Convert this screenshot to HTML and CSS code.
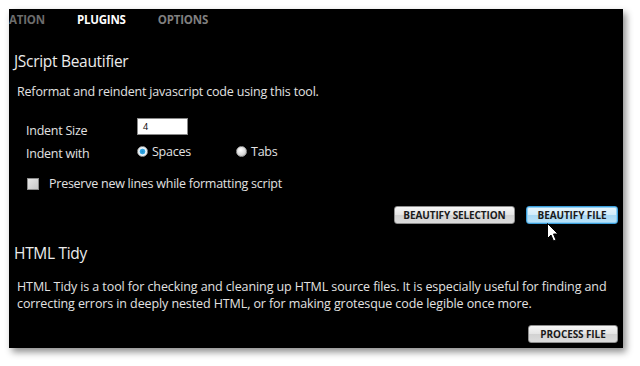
FILE: index.html
```html
<!DOCTYPE html>
<html>
<head>
<meta charset="utf-8">
<link rel="stylesheet" href="styles.css">
</head>
<body>
<div class="panel">
  <nav class="tabs">
    <span class="tab tab-cut">ATION</span>
    <span class="tab tab-active">PLUGINS</span>
    <span class="tab">OPTIONS</span>
  </nav>

  <section class="section">
    <h2 class="title">JScript Beautifier</h2>
    <p class="desc">Reformat and reindent javascript code using this tool.</p>
    <div class="form">
      <div class="row">
        <span class="label">Indent Size</span>
        <span class="input">4</span>
      </div>
      <div class="row">
        <span class="label">Indent with</span>
        <span class="radio-group">
          <span class="radio radio-on"></span><span class="radio-text">Spaces</span>
        </span>
        <span class="radio-group">
          <span class="radio"></span><span class="radio-text">Tabs</span>
        </span>
      </div>
      <div class="row row-check">
        <span class="check"></span>
        <span class="check-text">Preserve new lines while formatting script</span>
      </div>
    </div>
    <div class="actions">
      <span class="btn btn-sel">BEAUTIFY SELECTION</span>
      <span class="btn btn-hot">BEAUTIFY FILE
        <svg class="cursor" width="12" height="19" viewBox="0 0 12 19"><path d="M0.5 0.5 L0.5 15.5 L4 12 L6.5 18 L9 17 L6.5 11 L11 11 Z" fill="#fff" stroke="#000" stroke-width="1"/></svg>
      </span>
    </div>
  </section>

  <section class="section section-tidy">
    <h2 class="title">HTML Tidy</h2>
    <p class="desc desc-long">HTML Tidy is a tool for checking and cleaning up HTML source files. It is especially useful for finding and correcting errors in deeply nested HTML, or for making grotesque code legible once more.</p>
    <div class="actions actions-tidy">
      <span class="btn btn-proc">PROCESS FILE</span>
    </div>
  </section>
</div>
</body>
</html>
```
FILE: styles.css
```css
html, body {
  margin: 0;
  padding: 0;
  background: #ffffff;
}
body {
  width: 640px;
  height: 366px;
  overflow: hidden;
  font-family: "Open Sans", "Noto Sans", sans-serif;
}
.panel {
  margin: 9px 0 0 9px;
  width: 614px;
  height: 339px;
  background: #000;
  overflow: hidden;
  box-shadow: 3px 4px 7px rgba(0,0,0,0.45);
  position: relative;
  box-sizing: border-box;
  color: #e6e6e6;
}
.tabs {
  display: flex;
  gap: 32px;
  height: 20px;
  align-items: center;
  font-weight: 700;
  font-size: 11.5px;
  letter-spacing: -0.2px;
}
.tab { color: #7f7f7f; }
.tab-cut { margin-left: 0; color: #6c6c6c; }
.tab-active { color: #ffffff; }

.section { padding: 0 5px 0 4px; }
.title {
  margin: 22px 0 0 1px;
  font-size: 15.5px;
  font-weight: 400;
  line-height: 20px;
  color: #ececec;
  letter-spacing: -0.3px;
}
.desc {
  margin: 12px 0 0 4px;
  font-size: 12.5px;
  line-height: 17px;
  color: #e2e2e2;
  letter-spacing: -0.18px;
}
.form { margin: 19px 0 0 13px; }
.row {
  display: flex;
  align-items: center;
  height: 23px;
  font-size: 12.5px;
  color: #e2e2e2;
  letter-spacing: -0.25px;
}
.label { width: 111px; }
.input {
  width: 44px;
  height: 15px;
  background: #fff;
  border: 1px solid #888;
  color: #000;
  font-size: 9px;
  line-height: 15px;
  padding-left: 5px;
  box-sizing: content-box;
  margin-top: -8px;
}
.radio-group {
  display: flex;
  align-items: center;
  width: 99px;
  margin-top: -5px;
}
.radio {
  width: 9px;
  height: 9px;
  border-radius: 50%;
  background: radial-gradient(circle at 40% 35%, #ffffff 0%, #d8d8d8 60%, #a8a8a8 100%);
  border: 1px solid #9a9a9a;
  margin-right: 4px;
}
.radio-on {
  background: radial-gradient(circle, #1a8fd0 0%, #37a9e6 40%, #e8f4fb 50%, #f4f4f4 100%);
}
.radio-text { font-size: 12.5px; }
.row-check { margin-top: 7px; }
.check {
  width: 10px;
  height: 10px;
  background: linear-gradient(135deg, #e8e8e8, #c8c8c8);
  border: 1px solid #8c8c8c;
  margin: 0 10px 0 1px;
}
.actions {
  display: flex;
  justify-content: flex-end;
  gap: 11px;
  margin-top: 11px;
  padding-right: 0;
}
.btn {
  display: flex;
  align-items: center;
  justify-content: center;
  height: 18px;
  border-radius: 3px;
  font-size: 10px;
  font-weight: 700;
  color: #1a1a1a;
  letter-spacing: -0.1px;
  box-sizing: border-box;
  position: relative;
}
.btn-sel {
  width: 121px;
  background: linear-gradient(#f6f6f6, #e4e4e4 50%, #d2d2d2 51%, #dcdcdc);
  border: 1px solid #8e8e8e;
}
.btn-hot {
  width: 92px;
  background: linear-gradient(#e9f6fd, #d0ecfb 50%, #a8d9f5 51%, #bce3f9);
  border: 1px solid #3c9fdc;
  box-shadow: 0 0 0 1px #8fd0f5 inset;
}
.cursor {
  position: absolute;
  left: 20px;
  top: 16px;
}
.section-tidy .title { margin-top: 19px; }
.desc-long { margin-top: 15px; letter-spacing: -0.1px; }
.actions-tidy { margin-top: 13px; }
.btn-proc {
  width: 90px;
  background: linear-gradient(#f6f6f6, #e4e4e4 50%, #d2d2d2 51%, #dcdcdc);
  border: 1px solid #8e8e8e;
}
```
